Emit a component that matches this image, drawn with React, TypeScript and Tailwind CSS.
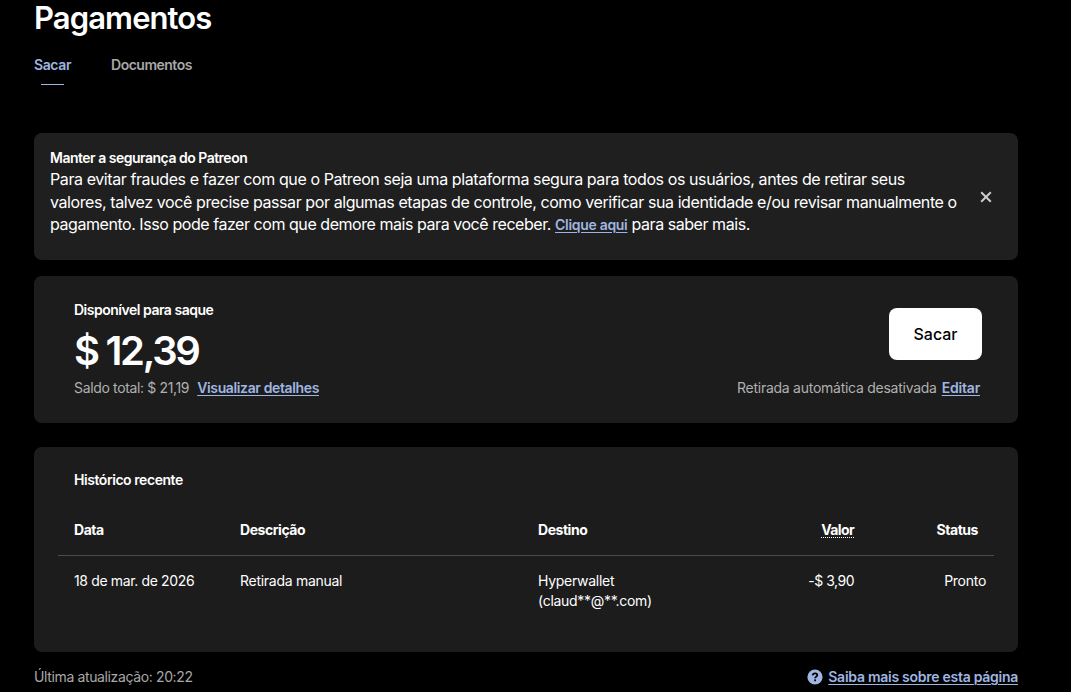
import type { ReactNode } from "react";

const payouts = [
  {
    date: "18 de mar. de 2026",
    description: "Retirada manual",
    destination: ["Hyperwallet", "(claud**@**.com)"],
    amount: "-$ 3,90",
    status: "Pronto",
  },
];

function TextLink({
  children,
  className = "tracking-[-0.37px]",
}: {
  children: ReactNode;
  className?: string;
}) {
  return (
    <a
      href="#"
      className={`font-semibold text-[#9fb6e0] underline decoration-1 underline-offset-2 ${className}`}
    >
      {children}
    </a>
  );
}

function CloseIcon() {
  return (
    <svg width="12" height="12" viewBox="0 0 12 12" fill="none" aria-hidden="true">
      <path d="M1.2 1.2L10.8 10.8M10.8 1.2L1.2 10.8" stroke="#cccccc" strokeWidth="2" />
    </svg>
  );
}

function HelpIcon() {
  return (
    <svg width="16" height="16" viewBox="0 0 16 16" fill="none" aria-hidden="true">
      <circle cx="8" cy="8" r="7.6" fill="#9fb6e0" />
      <path
        d="M5.7 6.4C5.8 5 6.7 4.3 8 4.3c1.4 0 2.3.8 2.3 1.9C10.3 7.6 8.1 7.7 8.1 9.3"
        stroke="#000"
        strokeWidth="1.8"
      />
      <rect x="7.2" y="10.4" width="1.8" height="1.8" fill="#000" />
    </svg>
  );
}

export default function App() {
  return (
    <div className="h-[692px] overflow-hidden bg-black pl-[34px] font-['Inter',sans-serif] text-sm text-white">
      <main className="w-[984px]">
        <h1 className="h-[55px] text-[31px] leading-[36px] font-semibold tracking-[-0.9px]">
          Pagamentos
        </h1>

        <nav className="flex h-[78px] gap-10 leading-5 font-semibold">
          <a href="#" className="flex flex-col items-center text-[#9fb6e0]">
            <span className="tracking-[-0.4px]">Sacar</span>
            <span className="mt-[9px] h-px w-[23px] bg-[#9fb6e0]" />
          </a>
          <a href="#" className="tracking-[-0.5px] text-[#a8a8a8]">
            Documentos
          </a>
        </nav>

        <section className="flex h-[127px] items-center justify-between rounded-lg bg-[#1f1f1f] pr-[26px] pl-4">
          <div className="h-[95px]">
            <h2 className="h-[19px] leading-[18px] font-semibold tracking-[-0.5px]">
              Manter a segurança do Patreon
            </h2>
            <p className="text-base leading-[22.5px] whitespace-nowrap tracking-[-0.41px]">
              Para evitar fraudes e fazer com que o Patreon seja uma plataforma segura para todos os usuários, antes de retirar seus
              <br />
              valores, talvez você precise passar por algumas etapas de controle, como verificar sua identidade e/ou revisar manualmente o
              <br />
              <span className="tracking-[-0.45px]">
                pagamento. Isso pode fazer com que demore mais para você receber.{" "}
                <TextLink className="text-sm tracking-[-0.3px]">Clique aqui</TextLink> para saber
                mais.
              </span>
            </p>
          </div>
          <button type="button" aria-label="Fechar">
            <CloseIcon />
          </button>
        </section>

        <section className="mt-4 flex h-[147px] justify-between rounded-lg bg-[#1c1c1c] pr-9 pl-10">
          <div className="pt-6">
            <h2 className="leading-5 font-semibold tracking-[-0.49px]">Disponível para saque</h2>
            <p className="mt-1 text-[40px] leading-[54px] font-semibold tracking-[-2.3px]">$ 12,39</p>
            <p className="flex gap-2 leading-5 text-[#b0b0b0]">
              <span className="tracking-[-0.35px]">Saldo total: $ 21,19</span>
              <TextLink>Visualizar detalhes</TextLink>
            </p>
          </div>
          <div className="flex flex-col items-end pt-8">
            <button
              type="button"
              className="h-[52px] w-[93px] rounded-lg bg-white text-base font-medium text-black"
            >
              Sacar
            </button>
            <p className="mt-[18px] flex gap-[5px] pr-[2px] leading-5 text-[#b0b0b0]">
              <span className="tracking-[-0.26px]">Retirada automática desativada</span>
              <TextLink className="tracking-[-0.2px]">Editar</TextLink>
            </p>
          </div>
        </section>

        <section className="mt-6 h-[205px] rounded-lg bg-[#1c1c1c] px-6 pt-6">
          <h2 className="h-[47px] pl-4 leading-[18px] font-semibold tracking-[-0.44px]">
            Histórico recente
          </h2>
          <table className="w-full table-fixed border-collapse text-left">
            <colgroup>
              <col className="w-[166px]" />
              <col className="w-[298px]" />
              <col className="w-[240px]" />
              <col className="w-[108px]" />
              <col />
            </colgroup>
            <thead>
              <tr className="h-[37px] border-b border-[#4a4a4a] align-top leading-[23px] font-semibold tracking-[-0.45px]">
                <th className="p-0 pl-4">Data</th>
                <th className="p-0 pl-4">Descrição</th>
                <th className="p-0 pl-4">Destino</th>
                <th className="p-0 pr-4 text-right">
                  <span className="tracking-[-0.6px] underline decoration-dotted decoration-1 underline-offset-2">
                    Valor
                  </span>
                </th>
                <th className="p-0 pr-4 text-right">Status</th>
              </tr>
            </thead>
            <tbody>
              {payouts.map((payout) => (
                <tr key={payout.date} className="align-top leading-5 tracking-[-0.28px]">
                  <td className="pt-[15px] pl-4 tracking-[-0.36px]">{payout.date}</td>
                  <td className="pt-[15px] pl-4">{payout.description}</td>
                  <td className="pt-[15px] pl-4">
                    {payout.destination.map((line) => (
                      <div key={line}>{line}</div>
                    ))}
                  </td>
                  <td className="pt-[15px] pr-4 text-right tracking-[-0.5px]">{payout.amount}</td>
                  <td className="pt-[15px] pr-2 text-right">{payout.status}</td>
                </tr>
              ))}
            </tbody>
          </table>
        </section>

        <footer className="mt-[15px] flex items-center justify-between leading-5">
          <span className="tracking-[-0.37px] text-[#a8a8a8]">Última atualização: 20:22</span>
          <span className="flex items-center gap-[5px]">
            <HelpIcon />
            <TextLink className="tracking-[-0.27px]">Saiba mais sobre esta página</TextLink>
          </span>
        </footer>
      </main>
    </div>
  );
}
